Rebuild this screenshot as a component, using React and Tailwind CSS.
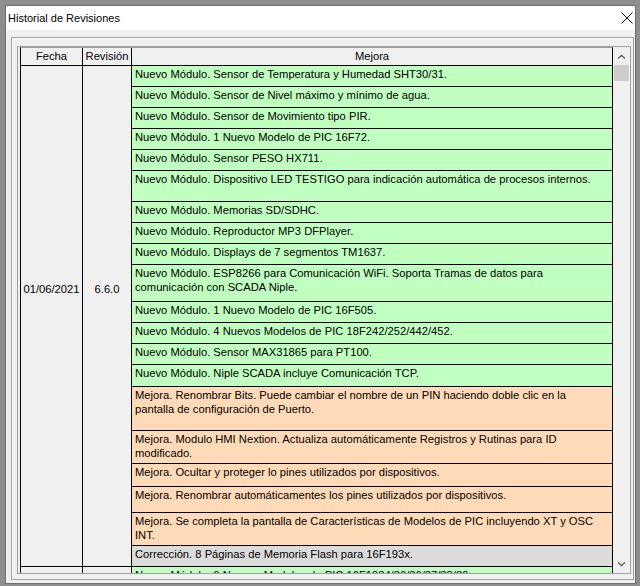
import React from 'react';

const rows = [
    { c: 'g', h: 21, t: ['Nuevo Módulo. Sensor de Temperatura y Humedad SHT30/31.'] },
    { c: 'g', h: 21, t: ['Nuevo Módulo. Sensor de Nivel máximo y mínimo de agua.'] },
    { c: 'g', h: 21, t: ['Nuevo Módulo. Sensor de Movimiento tipo PIR.'] },
    { c: 'g', h: 21, t: ['Nuevo Módulo. 1 Nuevo Modelo de PIC 16F72.'] },
    { c: 'g', h: 21, t: ['Nuevo Módulo. Sensor PESO HX711.'] },
    { c: 'g', h: 31, t: ['Nuevo Módulo. Dispositivo LED TESTIGO para indicación automática de procesos internos.'] },
    { c: 'g', h: 21, t: ['Nuevo Módulo. Memorias SD/SDHC.'] },
    { c: 'g', h: 21, t: ['Nuevo Módulo. Reproductor MP3 DFPlayer.'] },
    { c: 'g', h: 21, t: ['Nuevo Módulo. Displays de 7 segmentos TM1637.'] },
    { c: 'g', h: 37, t: ['Nuevo Módulo. ESP8266 para Comunicación WiFi. Soporta Tramas de datos para', 'comunicación con SCADA Niple.'] },
    { c: 'g', h: 21, t: ['Nuevo Módulo. 1 Nuevo Modelo de PIC 16F505.'] },
    { c: 'g', h: 21, t: ['Nuevo Módulo. 4 Nuevos Modelos de PIC 18F242/252/442/452.'] },
    { c: 'g', h: 21, t: ['Nuevo Módulo. Sensor MAX31865 para PT100.'] },
    { c: 'g', h: 22, t: ['Nuevo Módulo. Niple SCADA incluye Comunicación TCP.'] },
    { c: 'o', h: 44, t: ['Mejora. Renombrar Bits. Puede cambiar el nombre de un PIN haciendo doble clic en la', 'pantalla de configuración de Puerto.'] },
    { c: 'o', h: 33, t: ['Mejora. Modulo HMI Nextion. Actualiza automáticamente Registros y Rutinas para ID', 'modificado.'] },
    { c: 'o', h: 23, t: ['Mejora. Ocultar y proteger lo pines utilizados por dispositivos.'] },
    { c: 'o', h: 26, t: ['Mejora. Renombrar automáticamentes los pines utilizados por dispositivos.'] },
    { c: 'o', h: 33, t: ['Mejora. Se completa la pantalla de Características de Modelos de PIC incluyendo XT y OSC', 'INT.'] },
    { c: 'x', h: 21, t: ['Corrección. 8 Páginas de Memoria Flash para 16F193x.'] },
];

const bg = { g: 'bg-[#c0ffc0]', o: 'bg-[#ffdab9]', x: 'bg-[#dcdcdc]' };

const Chevron = ({ down }) => (
    <svg width="9" height="6" viewBox="0 0 9 6">
        <path
            d={down ? 'M1 1.5 L4.5 4.5 L8 1.5' : 'M1 4.5 L4.5 1.5 L8 4.5'}
            fill="none"
            stroke="#606060"
            strokeWidth="1.4"
        />
    </svg>
);

const App = () => {
    return (
        <div
            className="w-[640px] h-[586px] bg-[#8e8e8e] pt-[5px] pl-[5px] pr-[4px] overflow-hidden text-black"
            style={{ fontFamily: '"Liberation Sans", Arial, sans-serif' }}
        >
            <div className="h-[579px] bg-[#f0f0f0] border border-[#6e6e6e] flex flex-col">
                {/* barra de título */}
                <div className="h-[24px] bg-white flex items-center justify-between pl-[2px] pr-[2px]">
                    <span className="text-[11px]">Historial de Revisiones</span>
                    <svg width="12" height="12" viewBox="0 0 12 12">
                        <path d="M0.5 0.5 L11.5 11.5 M11.5 0.5 L0.5 11.5" stroke="#111" strokeWidth="1" />
                    </svg>
                </div>

                {/* cuerpo */}
                <div className="pl-[5px] pt-[7px] pr-[1px]">
                    <div className="border border-[#a0a0a0] shadow-[inset_1px_1px_0_#ffffff] pl-[5px] pt-[8px] pr-[2px] pb-[5px]">
                        <div className="h-[528px] border border-[#a0a0a0] bg-white flex">
                            {/* tabla */}
                            <div className="flex-1 pl-[2px] bg-[#f0f0f0] overflow-hidden">
                                <div className="border-l border-r border-black border-t border-t-[#a0a0a0] text-[11.2px] leading-[14px]">
                                    <div className="flex h-[18px] border-b border-black">
                                        <div className="w-[62px] border-r border-black text-center pt-[1px]">Fecha</div>
                                        <div className="w-[49px] border-r border-black text-center pt-[1px]">Revisión</div>
                                        <div className="flex-1 text-center pt-[1px]">Mejora</div>
                                    </div>

                                    <div className="flex">
                                        <div className="w-[62px] border-r border-b border-black text-center pt-[216px]">01/06/2021</div>
                                        <div className="w-[49px] border-r border-b border-black text-center pt-[216px]">6.6.0</div>
                                        <div className="flex-1 flex flex-col">
                                            {rows.map((r, i) => (
                                                <div
                                                    key={i}
                                                    className={`${bg[r.c]} border-b border-black pl-[3px] pt-[1px] whitespace-nowrap overflow-hidden`}
                                                    style={{ height: r.h }}
                                                >
                                                    {r.t.map((line, j) => (
                                                        <div key={j}>{line}</div>
                                                    ))}
                                                </div>
                                            ))}
                                        </div>
                                    </div>

                                    <div className="flex">
                                        <div className="w-[62px] border-r border-black h-[21px]"></div>
                                        <div className="w-[49px] border-r border-black h-[21px]"></div>
                                        <div className="flex-1 bg-[#c0ffc0] h-[21px] pl-[3px] pt-[1px] whitespace-nowrap">
                                            Nuevo Módulo. 6 Nuevos Modelos de PIC 16F1934/36/36/37/38/39.
                                        </div>
                                    </div>
                                </div>
                            </div>

                            {/* barra de desplazamiento */}
                            <div className="w-[17px] bg-[#f0f0f0] flex flex-col">
                                <div className="h-[17px] flex items-center justify-center pt-[2px]">
                                    <Chevron />
                                </div>
                                <div className="mt-[1px] mx-[1px] h-[16px] bg-[#cdcdcd]"></div>
                                <div className="flex-1"></div>
                                <div className="h-[17px] flex items-center justify-center pb-[2px]">
                                    <Chevron down />
                                </div>
                            </div>
                        </div>
                    </div>
                </div>
            </div>
        </div>
    );
};

export default App;
